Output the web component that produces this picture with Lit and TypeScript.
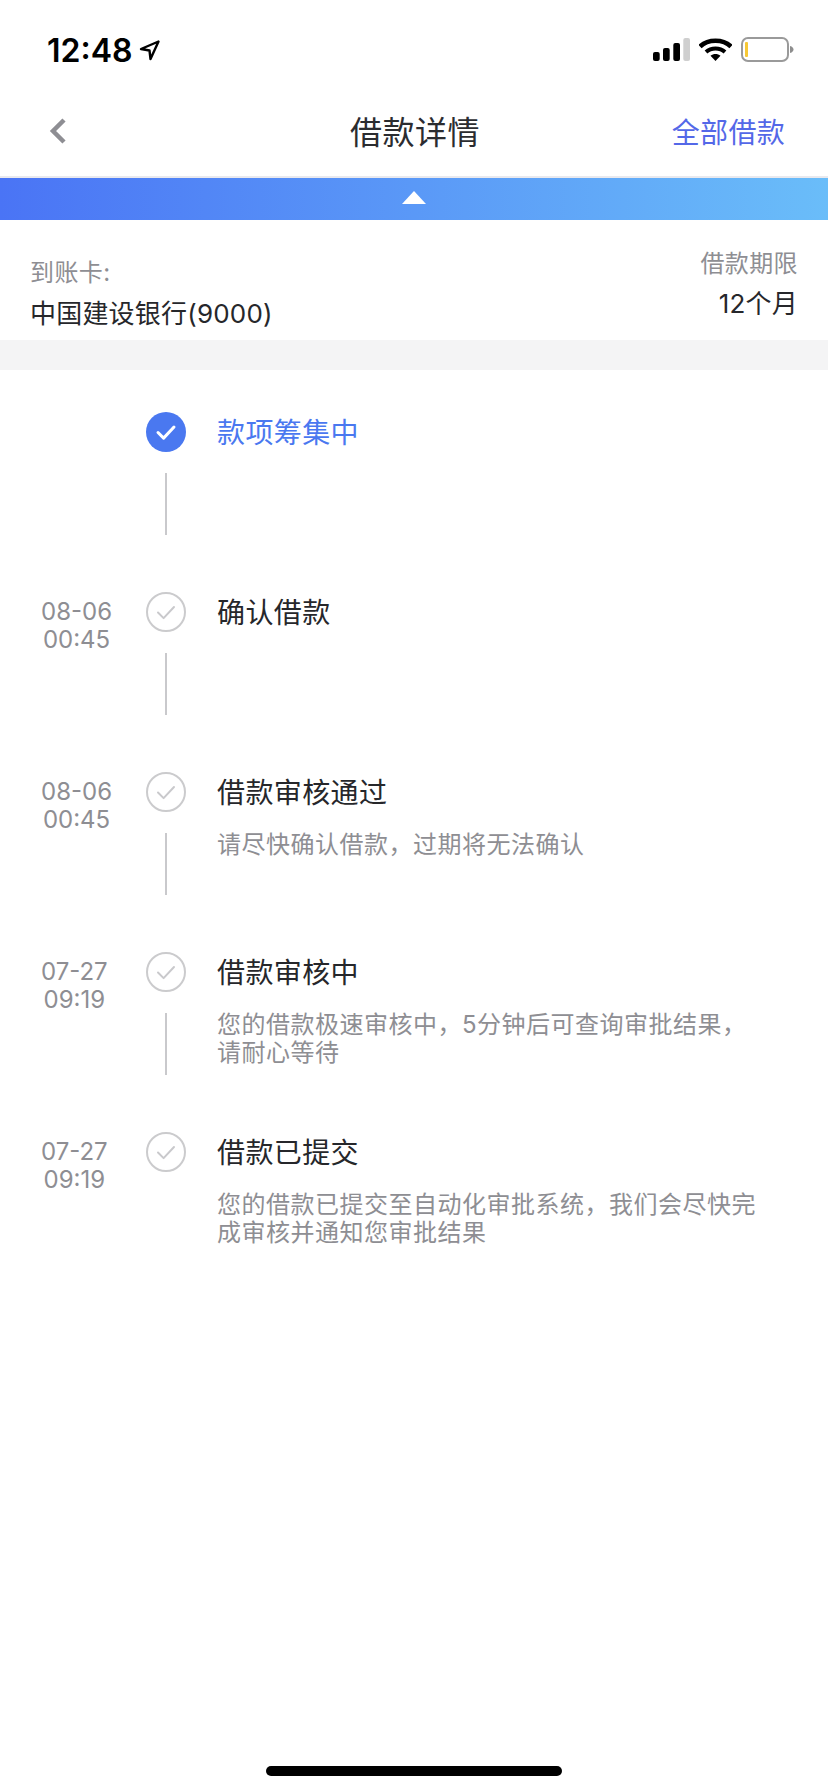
import { LitElement, html, css, svg } from 'lit';
import { customElement } from 'lit/decorators.js';

interface Step {
  date?: string;
  time?: string;
  title: string;
  desc?: string;
  active?: boolean;
}

const STEPS: Step[] = [
  { title: '款项筹集中', active: true },
  { date: '08-06', time: '00:45', title: '确认借款' },
  { date: '08-06', time: '00:45', title: '借款审核通过', desc: '请尽快确认借款，过期将无法确认' },
  { date: '07-27', time: '09:19', title: '借款审核中', desc: '您的借款极速审核中，5分钟后可查询审批结果，请耐心等待' },
  { date: '07-27', time: '09:19', title: '借款已提交', desc: '您的借款已提交至自动化审批系统，我们会尽快完成审核并通知您审批结果' },
];

const checkPath = svg`<path d="M12 20.5l5.6 5.6L28 15" fill="none" stroke-linecap="round" stroke-linejoin="round"/>`;

@customElement('app-root')
export class AppRoot extends LitElement {
  static styles = css`
    :host {
      display: block;
      width: 828px;
      height: 1792px;
      background: #fff;
      font-family: 'Inter', 'Noto Sans CJK SC', sans-serif;
      color: #26272b;
    }

    .page {
      height: 100%;
      display: flex;
      flex-direction: column;
    }

    .status {
      height: 90px;
      flex: none;
      display: flex;
      justify-content: space-between;
      align-items: flex-start;
      padding: 33px 34px 0 47px;
      box-sizing: border-box;
    }

    .clock {
      display: flex;
      align-items: center;
      gap: 7px;
      font-size: 32px;
      line-height: 36px;
      font-weight: 600;
      color: #000;
    }

    .status-icons {
      display: flex;
      align-items: flex-start;
      gap: 9px;
      padding-top: 4px;
    }

    .nav {
      height: 88px;
      flex: none;
      box-sizing: border-box;
      border-bottom: 2px solid #e9e9ee;
      display: grid;
      grid-template-columns: 1fr auto 1fr;
      align-items: center;
      padding: 0 43px 0 45px;
    }

    .back {
      margin: -5px 0 0 3px;
    }

    .nav-title {
      font-size: 32px;
      line-height: 44px;
      letter-spacing: 0.5px;
      color: #2b2c30;
    }

    .nav-link {
      justify-self: end;
      font-size: 28px;
      line-height: 40px;
      letter-spacing: 0.3px;
      color: #5468e8;
    }

    .banner {
      height: 42px;
      flex: none;
      box-sizing: border-box;
      padding-bottom: 3px;
      display: flex;
      align-items: center;
      justify-content: center;
      background: linear-gradient(90deg, #4a74f5 0%, #6abdf9 100%);
    }

    .info {
      height: 120px;
      flex: none;
      box-sizing: border-box;
      display: flex;
      justify-content: space-between;
      padding: 0 30px;
    }

    .info-left {
      padding-top: 37px;
    }

    .info-right {
      padding-top: 28px;
      text-align: right;
    }

    .info-right .value {
      margin-top: 6px;
    }

    .label {
      font-size: 24px;
      line-height: 32px;
      letter-spacing: 0.4px;
      color: #8e8e93;
    }

    .value {
      font-size: 26px;
      line-height: 36px;
      letter-spacing: 0.2px;
      color: #26272b;
      margin-top: 7px;
    }

    .divider {
      height: 30px;
      flex: none;
      background: #f4f4f5;
    }

    .timeline {
      padding-top: 42px;
    }

    .step {
      height: 180px;
      display: grid;
      grid-template-columns: 146px 40px 1fr;
    }

    .when {
      padding: 6px 0 0 41px;
    }

    /* the two lines centre on each other, the block itself sits at a fixed left edge */
    .when-inner {
      width: fit-content;
      text-align: center;
      font-size: 24px;
      line-height: 28px;
      color: #8e8e93;
    }

    .node {
      display: flex;
      flex-direction: column;
      align-items: center;
    }

    .dot {
      width: 40px;
      height: 40px;
      display: block;
    }

    .line {
      width: 2px;
      height: 62px;
      margin-top: 21px;
      background: #c9c9cc;
    }

    .body {
      padding: 1px 70px 0 31px;
    }

    .title {
      font-size: 28px;
      line-height: 40px;
      letter-spacing: 0.4px;
      color: #26272b;
    }

    .title.active {
      color: #4a78f0;
    }

    .desc {
      margin-top: 18px;
      font-size: 24px;
      line-height: 28px;
      letter-spacing: 0.5px;
      color: #8e8e93;
    }

    .home-bar {
      margin-top: auto;
      flex: none;
      height: 26px;
      display: flex;
      justify-content: center;
    }

    .home-bar span {
      width: 296px;
      height: 10px;
      border-radius: 5px;
      background: #000;
    }
  `;

  private renderDot(active?: boolean) {
    if (active) {
      return html`<svg class="dot" viewBox="0 0 40 40">
        <circle cx="20" cy="20" r="20" fill="#4a78f0"></circle>
        <g stroke="#fff" stroke-width="3">${checkPath}</g>
      </svg>`;
    }
    return html`<svg class="dot" viewBox="0 0 40 40">
      <circle cx="20" cy="20" r="19" fill="#fff" stroke="#cbcbcd" stroke-width="2"></circle>
      <g stroke="#c9c9cc" stroke-width="2">${checkPath}</g>
    </svg>`;
  }

  render() {
    return html`
      <div class="page">
        <div class="status">
          <div class="clock">
            12:48
            <svg width="22" height="22" viewBox="0 0 22 22">
              <path d="M19.500 1.500L2 9l8.500 1.500L11.500 19z" fill="none" stroke="#000" stroke-width="2.400" stroke-linejoin="round"></path>
            </svg>
          </div>
          <div class="status-icons">
            <svg width="37" height="24" viewBox="0 0 37 24">
              <rect x="0" y="15" width="6.700" height="9" rx="2" fill="#000"></rect>
              <rect x="10" y="11" width="6.700" height="13" rx="2" fill="#000"></rect>
              <rect x="20.300" y="6" width="6.700" height="18" rx="2" fill="#000"></rect>
              <rect x="30.300" y="1" width="6.700" height="23" rx="2" fill="#cfcfcf"></rect>
            </svg>
            <svg width="33" height="24" viewBox="0 0 33 24">
              <path d="M1 9.500C9 1.800 24 1.800 32 9.500" fill="none" stroke="#000" stroke-width="4.600"></path>
              <path d="M7 15C12.200 10.300 20.800 10.300 26 15" fill="none" stroke="#000" stroke-width="4"></path>
              <path d="M11.500 18.800c3-2.400 7-2.400 10 0L16.500 24z" fill="#000"></path>
            </svg>
            <svg width="53" height="25" viewBox="0 0 53 25">
              <rect x="1" y="1" width="46" height="23" rx="6" fill="#fff" stroke="#9a9a9a" stroke-width="2"></rect>
              <rect x="4" y="5" width="3" height="15" rx="1" fill="#f7c836"></rect>
              <path d="M49 9c2.400.6 3.500 2 3.500 3.500S51.400 15.400 49 16z" fill="#8e8e8e"></path>
            </svg>
          </div>
        </div>

        <div class="nav">
          <svg class="back" width="20" height="28" viewBox="0 0 20 28">
            <path d="M16 3L5 14l11 11" fill="none" stroke="#8e8e93" stroke-width="4.500"></path>
          </svg>
          <div class="nav-title">借款详情</div>
          <div class="nav-link">全部借款</div>
        </div>

        <div class="banner">
          <svg width="24" height="13" viewBox="0 0 24 13"><path d="M12 0L24 13H0z" fill="#fff"></path></svg>
        </div>

        <div class="info">
          <div class="info-left">
            <div class="label">到账卡:</div>
            <div class="value">中国建设银行(9000)</div>
          </div>
          <div class="info-right">
            <div class="label">借款期限</div>
            <div class="value">12个月</div>
          </div>
        </div>

        <div class="divider"></div>

        <div class="timeline">
          ${STEPS.map(
            (s, i) => html`
              <div class="step">
                <div class="when">
                  <div class="when-inner">
                    <div>${s.date}</div>
                    <div>${s.time}</div>
                  </div>
                </div>
                <div class="node">
                  ${this.renderDot(s.active)}
                  ${i < STEPS.length - 1 ? html`<div class="line"></div>` : ''}
                </div>
                <div class="body">
                  <div class="title ${s.active ? 'active' : ''}">${s.title}</div>
                  ${s.desc ? html`<div class="desc">${s.desc}</div>` : ''}
                </div>
              </div>
            `
          )}
        </div>

        <div class="home-bar"><span></span></div>
      </div>
    `;
  }
}
